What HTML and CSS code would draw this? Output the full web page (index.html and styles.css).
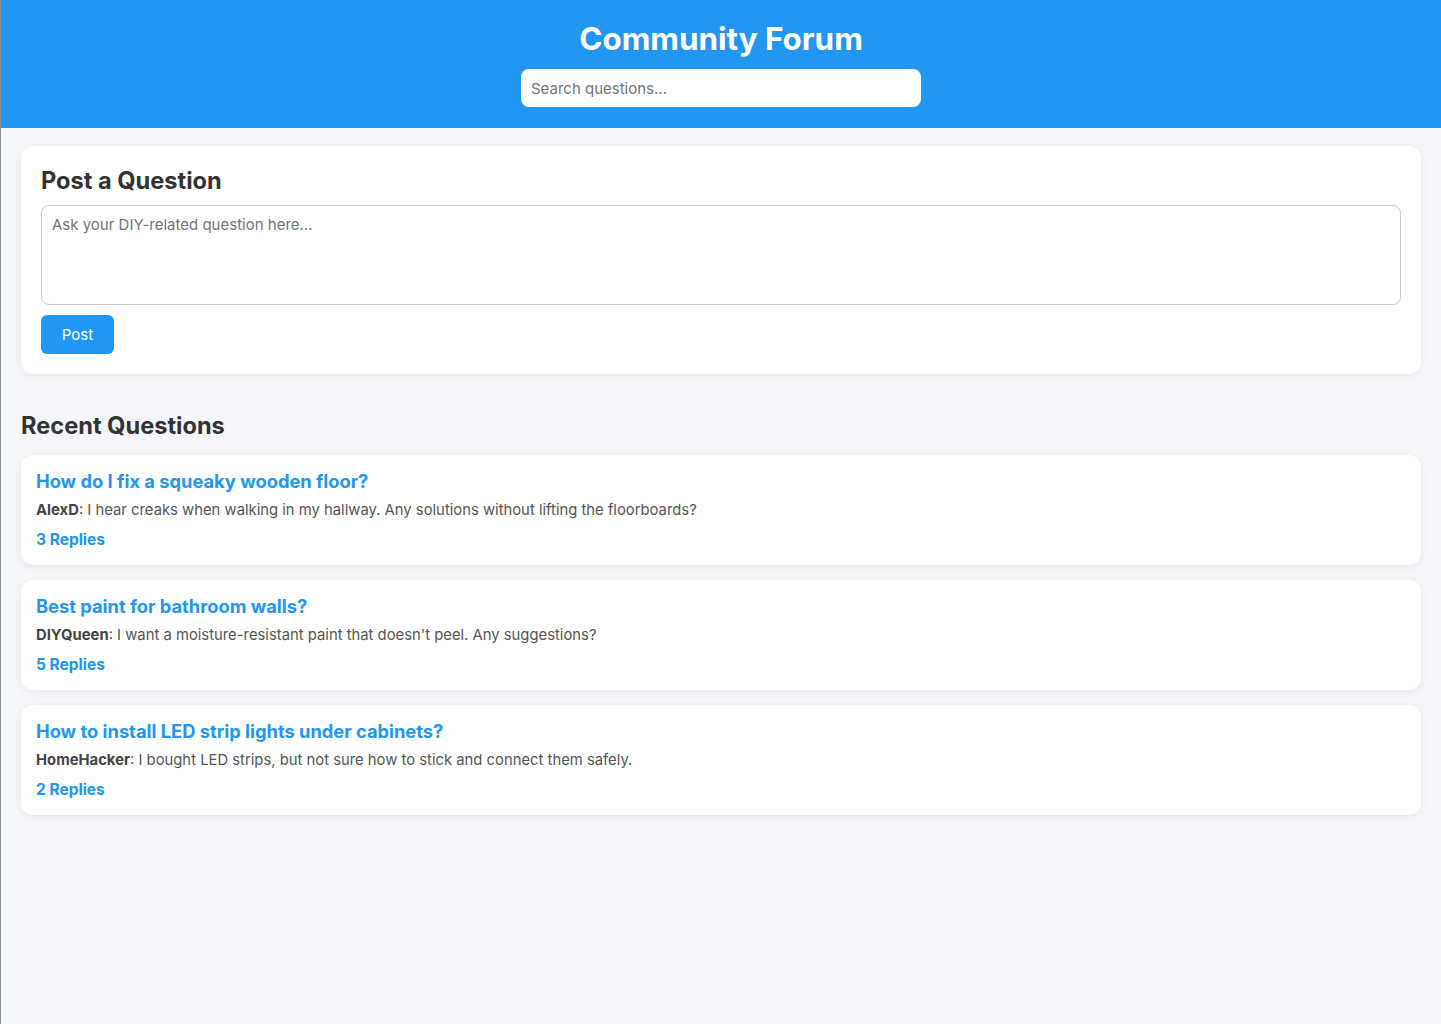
FILE: index.html
```html
<!DOCTYPE html>
<html lang="en">
<head>
<meta charset="utf-8">
<title>Community Forum</title>
<link rel="stylesheet" href="styles.css">
</head>
<body>
<header class="site-header">
  <h1 class="site-title">Community Forum</h1>
  <input class="search" type="text" placeholder="Search questions...">
</header>
<main class="main">
  <section class="card post-card">
    <h2 class="section-title">Post a Question</h2>
    <textarea class="ask" placeholder="Ask your DIY-related question here..."></textarea>
    <button class="post-btn">Post</button>
  </section>

  <h2 class="section-title recent-title">Recent Questions</h2>

  <div class="questions">
    <article class="card question">
      <h3 class="q-title">How do I fix a squeaky wooden floor?</h3>
      <p class="q-body"><strong>AlexD</strong>: I hear creaks when walking in my hallway. Any solutions without lifting the floorboards?</p>
      <div class="q-replies">3 Replies</div>
    </article>
    <article class="card question">
      <h3 class="q-title">Best paint for bathroom walls?</h3>
      <p class="q-body"><strong>DIYQueen</strong>: I want a moisture-resistant paint that doesn't peel. Any suggestions?</p>
      <div class="q-replies">5 Replies</div>
    </article>
    <article class="card question">
      <h3 class="q-title">How to install LED strip lights under cabinets?</h3>
      <p class="q-body"><strong>HomeHacker</strong>: I bought LED strips, but not sure how to stick and connect them safely.</p>
      <div class="q-replies">2 Replies</div>
    </article>
  </div>
</main>
</body>
</html>
```

FILE: styles.css
```css
* { box-sizing: border-box; }

html, body {
  margin: 0;
  padding: 0;
}

body {
  background: #f5f6fa;
  font-family: Inter, "Noto Sans", "Liberation Sans", sans-serif;
  color: #333;
  border-left: 1px solid #8a8f98;
  min-height: 1024px;
}

.site-header {
  background: #2196f3;
  padding: 20px 20px 21px;
  display: flex;
  flex-direction: column;
  align-items: center;
}

.site-title {
  margin: 0 0 10px;
  color: #fff;
  font-size: 31.4px;
  line-height: 39px;
  font-weight: 700;
}

.search {
  width: 400px;
  height: 38px;
  border: none;
  border-radius: 8px;
  padding: 0 10px;
  font-family: inherit;
  font-size: 15px;
  color: #333;
  background: #fff;
  outline: none;
}
.search::placeholder { color: #757575; }

.main {
  padding: 18px 20px 20px;
}

.card {
  background: #fff;
  border-radius: 12px;
  box-shadow: 0 2px 8px rgba(0, 0, 0, 0.06);
}

.post-card {
  padding: 20px;
  display: flex;
  flex-direction: column;
  align-items: flex-start;
  margin-bottom: 37px;
}

.section-title {
  margin: 0 0 10px;
  font-size: 23.6px;
  line-height: 29px;
  font-weight: 700;
  color: #333;
}

.ask {
  width: 100%;
  height: 100px;
  border: 1px solid #ccc;
  border-radius: 8px;
  padding: 10px;
  font-family: inherit;
  font-size: 15px;
  line-height: 18px;
  resize: none;
  margin: 0 0 10px;
  color: #333;
  outline: none;
}
.ask::placeholder { color: #757575; }

.post-btn {
  background: #2196f3;
  color: #fff;
  border: none;
  border-radius: 6px;
  height: 39px;
  width: 73px;
  font-family: inherit;
  font-size: 15px;
  cursor: pointer;
}

.recent-title {
  margin: 0 0 15px;
}

.questions {
  display: flex;
  flex-direction: column;
  gap: 15px;
}

.question {
  padding: 15px 15px 13px;
  height: 110px;
}

.q-title {
  margin: 0 0 7px;
  font-size: 18.3px;
  line-height: 22px;
  font-weight: 700;
  color: #2196f3;
}

.q-body {
  margin: 0 0 6px;
  font-size: 14.82px;
  line-height: 23px;
  color: #555;
}
.q-body strong {
  color: #444;
  font-weight: 700;
}

.q-replies {
  font-size: 15.5px;
  line-height: 23px;
  font-weight: 700;
  color: #2196f3;
}
```
